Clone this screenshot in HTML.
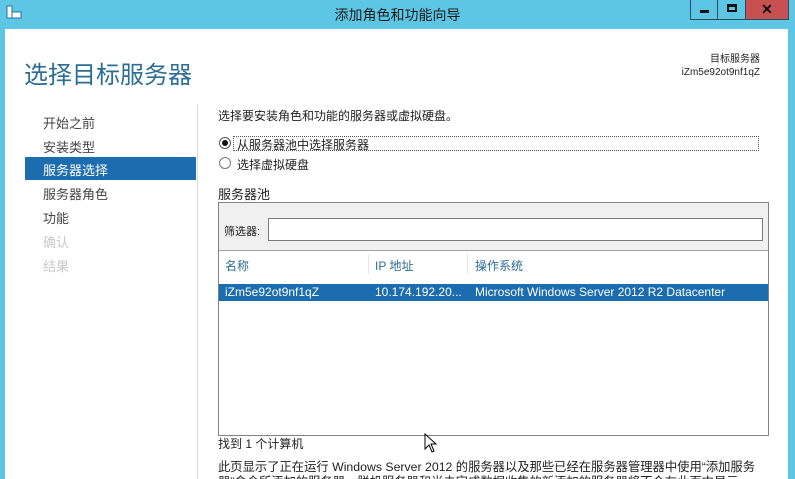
<!DOCTYPE html>
<html><head><meta charset="utf-8"><style>
*{margin:0;padding:0;box-sizing:border-box}
html,body{width:795px;height:479px;overflow:hidden}
body{background:#5cc6e4;font-family:"Liberation Sans","Noto Sans CJK SC",sans-serif;font-size:12px;color:#1e1e1e;position:relative}
.a{position:absolute;white-space:nowrap}
#main{position:absolute;left:5px;top:29px;width:783px;height:450px;background:#fff}
.nav{left:43px;font-size:13px;color:#444}
</style></head><body>
<div class="a" style="left:6px;top:5px;width:16px;height:14px">
<svg width="16" height="14"><rect x="1" y="1" width="5" height="12" fill="#fff" stroke="#2a6fa0"/><rect x="6" y="7" width="9" height="6" fill="#fff" stroke="#2a6fa0"/></svg></div>
<div class="a" style="left:0;width:795px;top:5px;text-align:center;font-size:14px;color:#1a1a1a">添加角色和功能向导</div>
<div class="a" style="left:690px;top:0;width:28px;height:20px;border:1px solid #2b4f62;border-top:none"><div style="position:absolute;left:9px;top:10px;width:9px;height:3px;background:#111"></div></div>
<div class="a" style="left:717px;top:0;width:29px;height:20px;border:1px solid #2b4f62;border-top:none"><div style="position:absolute;left:9px;top:4px;width:10px;height:8px;border:2px solid #111;border-top-width:3px"></div></div>
<div class="a" style="left:745px;top:0;width:44px;height:20px;background:#c75050;border:1px solid #2b4f62;border-top:none;text-align:center;font-weight:bold;font-size:14px;line-height:18px;color:#111">✕</div>
<div id="main"></div>
<div class="a" style="left:24px;top:55px;font-size:24px;color:#2b6e92">选择目标服务器</div>
<div class="a" style="right:35px;top:53px;font-size:10px;text-align:right;line-height:13px">目标服务器<br>iZm5e92ot9nf1qZ</div>
<div class="a" style="left:197px;top:105px;width:1px;height:374px;background:#d8d8d8"></div>
<div class="a nav" style="top:113px">开始之前</div>
<div class="a nav" style="top:137px">安装类型</div>
<div class="a" style="left:25px;top:157px;width:171px;height:23px;background:#1c6cb0"></div>
<div class="a nav" style="top:160px;color:#fff">服务器选择</div>
<div class="a nav" style="top:184px">服务器角色</div>
<div class="a nav" style="top:208px">功能</div>
<div class="a nav" style="top:232px;color:#c8c8c8">确认</div>
<div class="a nav" style="top:256px;color:#c8c8c8">结果</div>
<div class="a" style="left:218px;top:107px">选择要安装角色和功能的服务器或虚拟硬盘。</div>
<div class="a" style="left:219px;top:137px;width:12px;height:12px;border:1px solid #555;border-radius:50%"><div style="position:absolute;left:2px;top:2px;width:6px;height:6px;background:#111;border-radius:50%"></div></div>
<div class="a" style="left:233px;top:136px;width:526px;height:15px;border:1px dotted #555"></div>
<div class="a" style="left:237px;top:136px">从服务器池中选择服务器</div>
<div class="a" style="left:219px;top:157px;width:12px;height:12px;border:1px solid #777;border-radius:50%"></div>
<div class="a" style="left:237px;top:156px">选择虚拟硬盘</div>
<div class="a" style="left:218px;top:184px;font-size:13px">服务器池</div>
<div class="a" style="left:218px;top:202px;width:551px;height:234px;border:1px solid #828282;background:#fff"></div>
<div class="a" style="left:219px;top:203px;width:549px;height:48px;background:#f0f0f0;border-bottom:1px solid #a0a0a0"></div>
<div class="a" style="left:224px;top:223px;font-size:11px">筛选器:</div>
<div class="a" style="left:268px;top:218px;width:495px;height:23px;border:1px solid #7a7a7a;background:#fff"></div>
<div class="a" style="left:225px;top:257px;color:#2b6e92">名称</div>
<div class="a" style="left:368px;top:254px;width:1px;height:20px;background:#e6e6e6"></div>
<div class="a" style="left:375px;top:257px;color:#2b6e92">IP 地址</div>
<div class="a" style="left:467px;top:254px;width:1px;height:20px;background:#e6e6e6"></div>
<div class="a" style="left:475px;top:257px;color:#2b6e92">操作系统</div>
<div class="a" style="left:219px;top:284px;width:549px;height:17px;background:#1c6cb0"></div>
<div class="a" style="left:225px;top:285px;color:#fff">iZm5e92ot9nf1qZ</div>
<div class="a" style="left:375px;top:285px;color:#fff">10.174.192.20...</div>
<div class="a" style="left:475px;top:285px;color:#fff">Microsoft Windows Server 2012 R2 Datacenter</div>
<div class="a" style="left:218px;top:435px">找到 1 个计算机</div>
<div class="a" style="left:218px;top:457px;font-size:12.3px">此页显示了正在运行 Windows Server 2012 的服务器以及那些已经在服务器管理器中使用“添加服务</div>
<div class="a" style="left:218px;top:472px;font-size:12.3px">器”命令所添加的服务器。脱机服务器和尚未完成数据收集的新添加的服务器将不会在此页中显示。</div>
<svg class="a" style="left:424px;top:433px" width="14" height="22"><path d="M1 1 L1 16 L5 12 L8 19 L10 18 L7 11 L12 11 Z" fill="#fff" stroke="#000"/></svg>
</body></html>
